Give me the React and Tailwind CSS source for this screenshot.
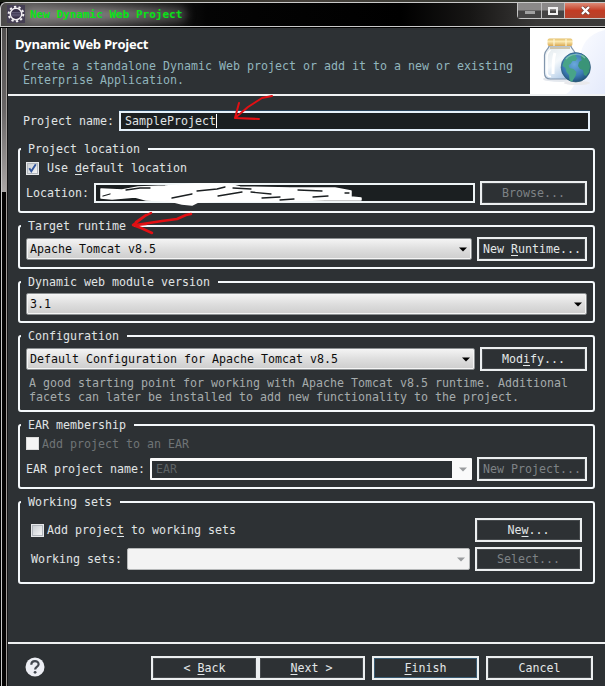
import React from "react";

const mono = "font-['DejaVu_Sans_Mono','Liberation_Mono',monospace]";

function Group({ title, className, children }) {
  return (
    <fieldset className={`ml-2.5 mb-[5px] w-[577px] rounded-[3px] border-2 border-[#f4f8fb] ${className}`}>
      <legend className="ml-px h-4 pl-[7px] pr-2 leading-4">{title}</legend>
      {children}
    </fieldset>
  );
}

function Button({ className = "", focused, disabled, children }) {
  return (
    <button
      className={`flex h-6 shrink-0 items-center justify-center border-2 border-[#eceff0] pb-px ${disabled ? "text-[#7d8285]" : "text-[#e3e7e8]"} ${focused ? "shadow-[inset_0_0_0_1px_#395b72]" : "shadow-[inset_0_0_0_1px_#45494c]"} ${className}`}
    >
      <span className="whitespace-pre">{children}</span>
    </button>
  );
}

function U({ children }) {
  return <span className="underline underline-offset-2">{children}</span>;
}

function Arrow({ className = "text-black" }) {
  return (
    <svg className={`shrink-0 ${className}`} width="8" height="5" viewBox="0 0 8 5">
      <path d="M0 0.5h8L4 4.5z" fill="currentColor" />
    </svg>
  );
}

function Combo({ className = "", children }) {
  return (
    <div
      className={`flex h-[22px] shrink-0 items-center justify-between rounded-[2px] border border-[#8b8f91] bg-linear-to-b from-[#f4f4f4] from-0% via-[#dedede] via-50% to-[#cdcdcd] pl-[3px] pr-1 text-[#0c0c0c] shadow-[inset_0_0_0_1px_#f5f5f5] ${className}`}
    >
      <span>{children}</span>
      <Arrow />
    </div>
  );
}

function Check({ checked, disabled }) {
  return (
    <span
      className={`flex size-[13px] shrink-0 items-center justify-center border ${disabled ? "border-[#dcdcdc] bg-[#f5f5f5]" : "border-[#e6e8ea] bg-linear-to-br from-[#c4c9ce] to-[#fafafa] shadow-[inset_0_0_0_1px_#b0b5bb]"}`}
    >
      {checked && (
        <svg width="9" height="9" viewBox="0 0 9 9" fill="none" stroke="#33569c" strokeWidth="1.9">
          <path d="M1.300 4.300l2 3L7.800 0.300" />
        </svg>
      )}
    </span>
  );
}

function TitleBar() {
  return (
    <div className="flex h-[28px] shrink-0 flex-col bg-black">
      <div className="h-[2px] bg-linear-to-r from-[#171c12] via-[#45403a] to-[#343a33]" />
      <div className="relative flex h-[25px] items-start overflow-hidden rounded-tl-md border-b border-l border-t border-[#c9c9c9] bg-[linear-gradient(90deg,#4a4848_0,#5a5858_25px,#3c3b3b_90px,#1c1c1c_150px,#040404_205px,#000_400px,#171615_470px,#393837_535px,#3c3b3a_605px)]">
        <div className="absolute left-[24px] top-[4px] h-[15px] w-[162px] rounded-full bg-[linear-gradient(90deg,#858282,#7c7979_50%,#5c5a5a_80%,#3f3e3e)] blur-[4px]" />
        <div className="relative ml-[6px] mt-[2px] flex size-[18px] items-center justify-center bg-[#453f54]">
          <svg width="18" height="18" viewBox="0 0 18 18" fill="none">
            <circle cx="9" cy="9" r="7.300" stroke="#f2eff2" strokeWidth="2" strokeDasharray="2.300 2.290" />
            <circle cx="9" cy="9" r="5.700" stroke="#f2eff2" strokeWidth="1.500" fill="#383049" />
            <path d="M4.600 7.600h8.800M4.400 9.200h9.200M4.700 10.800h8.600" stroke="#6f6885" strokeWidth="0.8" />
          </svg>
        </div>
        <span className="relative ml-[5px] mt-[4px] text-[11px] font-bold leading-4 text-[#08e316]">New Dynamic Web Project</span>
        <div className="ml-auto flex h-[16px] w-[88px] rounded-bl border-b border-l border-[#c5c5c5]">
          <div className="flex w-[24px] items-center justify-center border-r border-[#bdbdbd] bg-linear-to-b from-[#8b8989] from-45% to-[#454444] to-55%">
            <span className="mt-1 h-[3px] w-[10px] bg-[#a0a0a0]" />
          </div>
          <div className="flex w-[23px] items-center justify-center border-r border-[#bdbdbd] bg-linear-to-b from-[#8b8989] from-45% to-[#454444] to-55%">
            <span className="h-[8px] w-[10px] border-2 border-[#f1f1f1]" />
          </div>
          <div className="flex flex-1 items-center justify-center bg-linear-to-b from-[#dc8a76] from-0% via-[#c33c24] via-50% to-[#b4432c]">
            <svg width="11" height="9" viewBox="0 0 11 9">
              <path d="M2 1l7 7M9 1L2 8" stroke="#6c4038" strokeWidth="3.600" />
              <path d="M2 1l7 7M9 1L2 8" stroke="#fff" strokeWidth="2.300" />
            </svg>
          </div>
        </div>
      </div>
    </div>
  );
}

function JarPicture() {
  return (
    <svg width="75" height="66" viewBox="0 0 75 66" className="shrink-0">
      <defs>
        <linearGradient id="bg" x1="0" y1="0" x2="1" y2="1">
          <stop offset="0.35" stopColor="#f6f8fe" />
          <stop offset="1" stopColor="#e4eafb" />
        </linearGradient>
        <linearGradient id="lid" x1="0" y1="0" x2="0" y2="1">
          <stop offset="0" stopColor="#e3bd68" />
          <stop offset="0.4" stopColor="#fbe9b0" />
          <stop offset="1" stopColor="#d9a850" />
        </linearGradient>
        <linearGradient id="glass" x1="0" y1="0" x2="0.7" y2="1">
          <stop offset="0" stopColor="#e2e9ec" />
          <stop offset="0.5" stopColor="#f4f8fb" />
          <stop offset="1" stopColor="#a9c6e6" />
        </linearGradient>
        <radialGradient id="globe" cx="0.45" cy="0.4" r="0.65">
          <stop offset="0" stopColor="#6aa9dc" />
          <stop offset="0.6" stopColor="#3c7ab4" />
          <stop offset="1" stopColor="#1c4a6e" />
        </radialGradient>
      </defs>
      <rect width="75" height="66" fill="#fff" />
      <path d="M75 2v64H36C52 58 44 30 56 13Q62 5 75 2z" fill="url(#bg)" />
      <ellipse cx="31" cy="51" rx="18" ry="3" fill="#e4e8ee" />
      <ellipse cx="47" cy="55" rx="13" ry="2" fill="#e9e9ec" />
      <path d="M19 18h22c0 3 4.500 4 4.500 9v18c0 4-3 6-6 6H20.500c-4 0-6-2-6-6V27c0-5 4.500-6 4.500-9z" fill="url(#glass)" stroke="#8296ad" strokeWidth="1.200" />
      <path d="M20 20h20" stroke="#b9a77c" strokeWidth="1.200" />
      <path d="M20.500 22c-3 3-3.500 4-3.500 8v14c0 3 1.500 4.500 4 4.500" fill="none" stroke="#fff" strokeWidth="1.600" />
      <path d="M25 25c-2 5-2 12-2 21" fill="none" stroke="#fff" strokeWidth="3" />
      <rect x="17.500" y="10.500" width="25" height="7.500" rx="2" fill="url(#lid)" />
      <path d="M24 11v7M36 11v7" stroke="#fff6d5" strokeWidth="2" opacity="0.6" />
      <circle cx="45.800" cy="39.300" r="14.700" fill="url(#globe)" stroke="#275870" strokeWidth="0.6" />
      <path d="M32.500 38c1-6 4-10 9-11.500l5-.5-1 3 2 1-2 3-3 0-2 3-2 1 1 3 4 1 3 3-1 4-3 5-1 1-2-2-.5-5-2.500-3-1-4z" fill="#48a488" />
      <path d="M51 27l3 0c4 3 6 7 6 12l-1 5-3 4-2-1-1-5-3-1-2-3 1-4 3-2-1-2z" fill="#3a9477" />
      <path d="M36 31c5-6 14-6 19-1" fill="none" stroke="#b7dbe0" strokeWidth="1.500" opacity="0.45" />
    </svg>
  );
}

function Header() {
  return (
    <div className="flex h-[68px] shrink-0 justify-between border-b-2 border-[#f0f2f3]">
      <div>
        <h1 className="ml-[7px] mt-[7px] h-[18px] whitespace-nowrap font-['Open_Sans','Noto_Sans',sans-serif] text-[13px] font-bold leading-[18px] tracking-[-0.26px] text-white">
          Dynamic Web Project
        </h1>
        <p className="ml-[15px] mt-[6px] whitespace-nowrap leading-[14px] text-[#91b5bd]">
          Create a standalone Dynamic Web project or add it to a new or existing
          <br />
          Enterprise Application.
        </p>
      </div>
      <JarPicture />
    </div>
  );
}

function Scribble() {
  return (
    <svg className="absolute -left-[2px] -top-[4px]" width="280" height="26" viewBox="94 180 280 26" fill="none" stroke="#fff" strokeLinecap="round" strokeLinejoin="round">
      <path d="M101 188L122 189 138 186 165 185 195 183 228 183 240 186 290 187 335 187 351 190 351 196 361 197 361 199 325 199 270 200 225 200 198 201 192 204 182 203 170 200 146 199 135 196 112 198 101 197z" fill="#fff" strokeWidth="1.500" />
      <path d="M103 195l7-2M126 189l14-2 10 0M172 197l20-4M197 190l20-2 8-2M218 195l24-4M251 191l20 2M262 197l18-1M298 189l24 1M313 196l15-1M345 192h4M280 199l14-1M233 187l18 1" stroke="#1b1f21" strokeWidth="1.300" />
    </svg>
  );
}

function RedArrows() {
  return (
    <svg className="pointer-events-none absolute left-0 top-0" width="605" height="686" fill="none" stroke="#e20f13" strokeWidth="2" strokeLinecap="round" strokeLinejoin="round">
      <path d="M272 96L262 98 248 107 235 118M239 103L235 118 259 119" />
      <path d="M191 214L186 215 177 219 162 221 136 225M151 213L145 216 133 225 141 228 152 233M136 222l10-7M136 225l10-1" strokeWidth="2.500" />
    </svg>
  );
}

export default function App() {
  return (
    <div className={`relative flex h-[686px] w-[605px] flex-col overflow-hidden bg-black text-[11.63px] leading-4 text-[#e0e4e5] ${mono}`}>
      <TitleBar />
      <div className="flex flex-1">
        <div className="flex w-2 shrink-0">
          <div className="w-px bg-black" />
          <div className="w-px bg-[#c9c9c9]" />
          <div className="flex w-[4px] flex-col">
            <div className="h-[164px] bg-linear-to-b from-[#504e4e] via-[#696666] to-[#aaa7a6]" />
            <div className="flex-1 bg-[#050404]" />
          </div>
          <div className="w-px bg-[#a39e9b]" />
          <div className="w-px bg-[#161718]" />
        </div>
        <main className="flex w-[597px] flex-col bg-[#2d3134]">
          <Header />
          <div className="ml-[15px] mt-[15px] flex h-[20px] items-center">
            <span className="w-[96px] shrink-0">Project name:</span>
            <div className="flex h-[20px] w-[471px] items-center border-2 border-[#e4f0fa] bg-[#1b1f21] pl-1 shadow-[0_-1px_0_#28435a]">
              SampleProject
              <span className="h-[14px] w-px bg-white" />
            </div>
          </div>

          <Group title="Project location" className="mt-[10px] h-[72px]">
            <div className="ml-1.5 mt-[4px] flex h-[14px] items-center">
              <Check checked />
              <span className="ml-2">
                Use <U>d</U>efault location
              </span>
            </div>
            <div className="ml-1.5 mt-[6px] flex h-6 items-center">
              <span className="w-[68px] shrink-0">Location:</span>
              <div className="relative h-[20px] w-[381px] shrink-0 border-2 border-[#eef4f6] bg-[#1b1f21]">
                <Scribble />
              </div>
              <Button disabled className="ml-[5px] w-[107px]">
                Browse...
              </Button>
            </div>
          </Group>

          <Group title="Target runtime" className="h-[51px]">
            <div className="ml-1.5 mt-[3px] flex h-6 items-center">
              <Combo className="w-[446px]">Apache Tomcat v8.5</Combo>
              <Button className="ml-[5px] w-[110px]">
                New <U>R</U>untime...
              </Button>
            </div>
          </Group>

          <Group title="Dynamic web module version" className="h-[49px]">
            <div className="ml-1.5 mt-[3px]">
              <Combo className="w-[561px]">3.1</Combo>
            </div>
          </Group>

          <Group title="Configuration" className="h-[84px]">
            <div className="ml-1.5 mt-[3px] flex h-6 items-center">
              <Combo className="w-[449px]">Default Configuration for Apache Tomcat v8.5</Combo>
              <Button className="ml-[5px] w-[107px]">
                Mod<U>i</U>fy...
              </Button>
            </div>
            <p className="ml-[9px] mt-[5px] whitespace-nowrap leading-[14px] text-[#a5abac]">
              A good starting point for working with Apache Tomcat v8.5 runtime. Additional
              <br />
              facets can later be installed to add new functionality to the project.
            </p>
          </Group>

          <Group title="EAR membership" className="h-[72px]">
            <div className="ml-1.5 mt-[4px] flex h-[13px] items-center text-[#6f7476]">
              <Check disabled />
              <span className="ml-[3px]">Add project to an EAR</span>
            </div>
            <div className="ml-1.5 mt-[7px] flex h-6 items-center">
              <span className="w-[124px] shrink-0">EAR project name:</span>
              <div className="flex h-[22px] w-[322px] shrink-0 items-center rounded-[1px] bg-[#fafafa] pl-0.5">
                <div className="flex h-[17px] w-[300px] items-center bg-[#2c3033] pb-px pl-1 text-[#5d6264]">EAR</div>
                <Arrow className="ml-[7px] text-[#9a9c9e]" />
              </div>
              <Button disabled className="ml-[5px] w-[110px]">
                New Project...
              </Button>
            </div>
          </Group>

          <Group title="Working sets" className="h-[90px]">
            <div className="ml-[11px] mt-[8px] flex h-6 items-center">
              <Check />
              <span className="ml-[3px]">
                Add projec<U>t</U> to working sets
              </span>
              <Button className="ml-auto mr-[11px] w-[107px]">
                Ne<U>w</U>...
              </Button>
            </div>
            <div className="ml-[11px] mt-[5px] flex h-6 items-center">
              <span className="w-[96px] shrink-0">Working sets:</span>
              <div className="flex h-[22px] w-[343px] shrink-0 items-center justify-end rounded-[2px] border border-[#b5b7b8] bg-[#f3f3f3] pr-1">
                <Arrow className="text-[#9a9c9e]" />
              </div>
              <Button disabled className="ml-[5px] w-[107px]">
                Select...
              </Button>
            </div>
          </Group>

          <footer className="mt-auto flex h-[44px] shrink-0 items-start border-t-2 border-[#eef0f1]">
            <svg className="ml-[17px] mt-[13px] shrink-0" width="20" height="20" viewBox="0 0 20 20" fill="none">
              <circle cx="10" cy="10" r="9.500" fill="#eceef4" />
              <path d="M6.300 7.700C6.300 2.900 13.600 3.200 13.600 7.200c0 2.700-3.500 2.800-3.500 5.300" stroke="#42474f" strokeWidth="2.200" />
              <circle cx="10.100" cy="15.300" r="1.400" fill="#42474f" />
            </svg>
            <div className="ml-[106px] mt-[12px] flex">
              <Button className="w-[107px]">
                {"< "}
                <U>B</U>ack
              </Button>
              <Button className="w-[107px]">
                <U>N</U>ext {">"}
              </Button>
              <Button focused className="ml-[7px] w-[107px]">
                <U>F</U>inish
              </Button>
              <Button className="ml-[7px] w-[107px]">Cancel</Button>
            </div>
          </footer>
        </main>
      </div>
      <RedArrows />
    </div>
  );
}
